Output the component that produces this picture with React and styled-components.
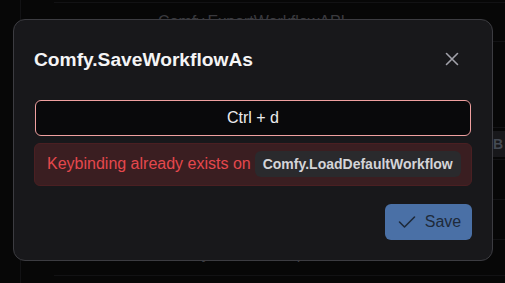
import React from "react";
import styled, { createGlobalStyle } from "styled-components";

const Global = createGlobalStyle`
  html, body { margin: 0; padding: 0; background: #0b0b0c; }
  body { font-family: "Liberation Sans", Arial, sans-serif; width: 505px; height: 283px; overflow: hidden; }
  * { box-sizing: border-box; }
`;

const Page = styled.div`
  position: relative;
  width: 505px;
  height: 283px;
  overflow: hidden;
`;

const Table = styled.div`
  margin-left: 20px;
  height: 283px;
  border-left: 1px solid #1c1c1f;
  padding-left: 33px;
  display: flex;
  flex-direction: column;
`;

const Row = styled.div`
  height: ${(p) => p.$h}px;
  flex-shrink: 0;
  border-top: 1px solid #1c1c1f;
  display: flex;
  align-items: center;
  justify-content: ${(p) => (p.$end ? "flex-end" : "center")};
  padding-right: ${(p) => (p.$end ? "0" : "56px")};
  padding-bottom: ${(p) => p.$pb || 0}px;
  color: #5a5a60;
  font-size: 16px;
`;

const KeyBadge = styled.span`
  background: #26262a;
  color: #6b7280;
  font-weight: bold;
  font-size: 14px;
  padding: 5px 2px 5px 6px;
  border-radius: 4px 0 0 4px;
`;

const Overlay = styled.div`
  position: absolute;
  inset: 0;
  background: rgba(0, 0, 0, 0.35);
  display: flex;
  align-items: center;
  justify-content: center;
`;

const Dialog = styled.div`
  width: 480px;
  height: 242px;
  margin-top: -4px;
  margin-left: 1px;
  background: #18181b;
  border: 1px solid #3c3c41;
  border-radius: 12px;
  display: flex;
  flex-direction: column;
  padding: 0 20px;
`;

const Header = styled.div`
  display: flex;
  align-items: center;
  justify-content: space-between;
  height: 80px;
  padding-top: 1px;
`;

const Title = styled.h2`
  margin: 0;
  font-size: 19.2px;
  font-weight: bold;
  color: #f4f4f5;
`;

const CloseBtn = styled.button`
  width: 32px;
  height: 32px;
  margin-right: 4px;
  margin-top: -2px;
  background: transparent;
  border: none;
  display: flex;
  align-items: center;
  justify-content: center;
  padding: 0;
  color: #a1a1aa;
`;

const Body = styled.div`
  display: flex;
  flex-direction: column;
  gap: 7px;
`;

const KeyInput = styled.div`
  height: 36px;
  margin: 0 1px;
  border: 1px solid #f0a0a0;
  border-radius: 6px;
  background: #09090b;
  color: #ececee;
  font-size: 16px;
  display: flex;
  align-items: center;
  justify-content: center;
`;

const ErrorBox = styled.div`
  height: 43px;
  background: #3a1e21;
  border: 1px solid #4a1f22;
  border-radius: 6px;
  display: flex;
  align-items: center;
  padding-left: 12px;
  gap: 4px;
  color: #e5484d;
  font-size: 16px;
`;

const Tag = styled.span`
  background: #2a2a2d;
  color: #d4d4d8;
  font-weight: bold;
  font-size: 14px;
  padding: 5px 8px;
  border-radius: 6px;
`;

const Footer = styled.div`
  display: flex;
  justify-content: flex-end;
  margin-top: 18px;
`;

const SaveBtn = styled.button`
  width: 87px;
  height: 36px;
  background: #4a70a6;
  border: none;
  border-radius: 6px;
  color: #1e2a3a;
  font-family: "Liberation Sans", Arial, sans-serif;
  font-size: 16px;
  display: flex;
  align-items: center;
  justify-content: center;
  gap: 9px;
  padding: 0 0 0 2px;
`;

export default function App() {
  return (
    <Page>
      <Global />
      <Table>
        <Row $h={2} style={{ borderTop: "none" }} />
        <Row $h={39}>Comfy.ExportWorkflowAPI</Row>
        <Row $h={86} $end />
        <Row $h={32} $end>
          <KeyBadge>B</KeyBadge>
        </Row>
        <Row $h={40} $end />
        <Row $h={40} $end />
        <Row $h={36} $pb={7}>Comfy.BrowseTemplates</Row>
        <Row $h={10} />
      </Table>
      <Overlay>
        <Dialog>
          <Header>
            <Title>Comfy.SaveWorkflowAs</Title>
            <CloseBtn>
              <svg width="14" height="14" viewBox="0 0 14 14" fill="none" stroke="currentColor" strokeWidth="1.6" strokeLinecap="round">
                <path d="M1.5 1.5 L12.5 12.5 M12.5 1.5 L1.5 12.5" />
              </svg>
            </CloseBtn>
          </Header>
          <Body>
            <KeyInput>Ctrl + d</KeyInput>
            <ErrorBox>
              Keybinding already exists on
              <Tag>Comfy.LoadDefaultWorkflow</Tag>
            </ErrorBox>
          </Body>
          <Footer>
            <SaveBtn>
              <svg width="18" height="14" viewBox="0 0 18 14" fill="none" stroke="currentColor" strokeWidth="1.6" strokeLinecap="round" strokeLinejoin="round">
                <path d="M1.5 7 L6.5 12 L16.5 2" />
              </svg>
              Save
            </SaveBtn>
          </Footer>
        </Dialog>
      </Overlay>
    </Page>
  );
}
